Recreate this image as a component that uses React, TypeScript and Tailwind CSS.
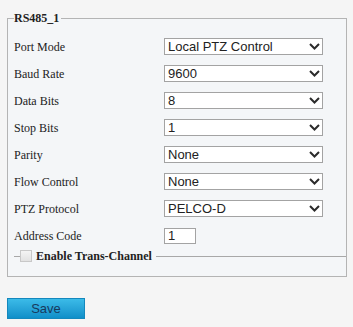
import { ReactNode } from "react";

const serif = { fontFamily: '"Liberation Serif", "Times New Roman", serif' };
const sans = { fontFamily: '"Liberation Sans", Arial, sans-serif' };

function Chevron() {
  return (
    <svg width="11" height="7" viewBox="0 0 11 7" className="shrink-0">
      <path d="M1 1 L5.5 5.5 L10 1" fill="none" stroke="#2b2b2b" strokeWidth="2" />
    </svg>
  );
}

function Select({ value }: { value: string }) {
  return (
    <div
      className="flex h-[17px] w-[159px] items-center justify-between border border-[#a3a3a3] bg-white pl-[3px] pr-[2px] text-[13px] leading-none text-[#222]"
      style={sans}
    >
      <span>{value}</span>
      <Chevron />
    </div>
  );
}

function Row({ label, children }: { label: string; children: ReactNode }) {
  return (
    <div className="flex h-[27px] items-center">
      <div className="w-[150px] text-[12px] text-[#222]" style={serif}>
        {label}
      </div>
      {children}
    </div>
  );
}

const fields = [
  ["Port Mode", "Local PTZ Control"],
  ["Baud Rate", "9600"],
  ["Data Bits", "8"],
  ["Stop Bits", "1"],
  ["Parity", "None"],
  ["Flow Control", "None"],
  ["PTZ Protocol", "PELCO-D"],
];

export default function App() {
  return (
    <div className="h-[327px] w-[353px] overflow-hidden bg-[#f5f5f5] pl-[7px] pt-[11px]">
      <fieldset className="w-[334px] border border-[#b4b4b4] bg-[#f4f6f8] pl-[6px] pb-[13px]">
        <legend
          className="pr-[2px] text-[12px] font-bold leading-[14px] text-[#222]"
          style={serif}
        >
          RS485_1
        </legend>
        <div className="pt-[8px]">
          {fields.map(([label, value]) => (
            <Row key={label} label={label}>
              <Select value={value} />
            </Row>
          ))}
          <Row label="Address Code">
            <div
              className="flex h-[16px] w-[32px] items-center border border-[#a3a3a3] bg-white pl-[3px] text-[13px] leading-none text-[#222]"
              style={sans}
            >
              1
            </div>
          </Row>
        </div>
        <fieldset className="w-[332px] border-0 border-t border-[#a8a8a8]">
          <legend className="ml-[6px] flex items-center pr-[4px] leading-[14px]">
            <span className="mr-[4px] inline-block h-[12px] w-[12px] border border-[#c8c8c8] bg-gradient-to-b from-[#f4f4f4] to-[#e2e2e2]" />
            <span className="text-[12px] font-bold text-[#222]" style={serif}>
              Enable Trans-Channel
            </span>
          </legend>
        </fieldset>
      </fieldset>
      <button
        className="mt-[21px] h-[21px] w-[78px] border border-[#1488bd] bg-gradient-to-b from-[#3bbbe8] to-[#0f8fc9] text-[13px] leading-none text-[#173a5e]"
        style={sans}
      >
        Save
      </button>
    </div>
  );
}
